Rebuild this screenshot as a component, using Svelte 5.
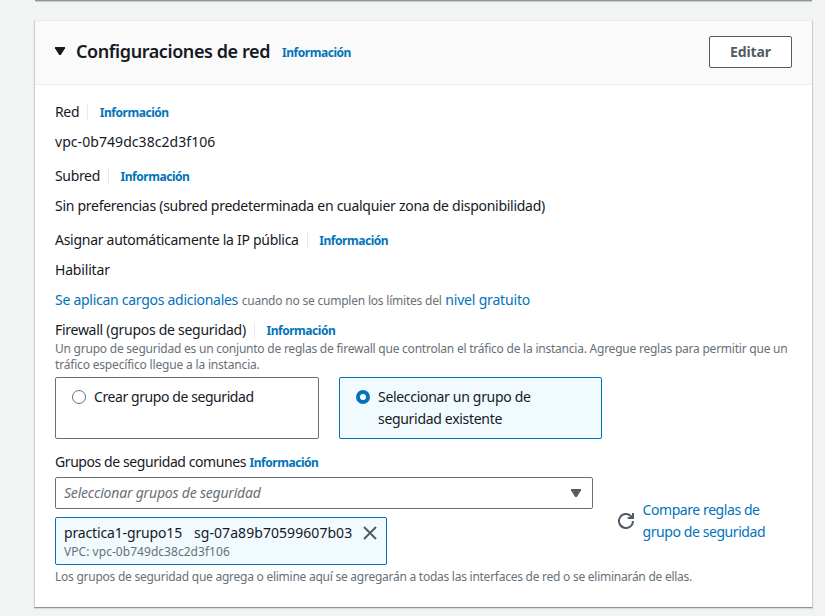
<script>
  let choice = $state('existing');
</script>

{#snippet info()}<a class="info" href="#info">Información</a>{/snippet}

<div class="page">
  <div class="previous"></div>
  <section class="card">
    <header>
      <svg class="caret" width="10" height="8" viewBox="0 0 10 8"><path d="M0 0h10v1.2L5.8 8H4.2L0 1.2z" fill="#16191f" /></svg>
      <h2>Configuraciones de red</h2>
      {@render info()}
      <button class="edit">Editar</button>
    </header>

    <div class="body">
      <div class="label"><span class="t-short">Red</span><i></i>{@render info()}</div>
      <div class="value t-id">vpc-0b749dc38c2d3f106</div>
      <div class="label"><span class="t-short">Subred</span><i></i>{@render info()}</div>
      <div class="value">Sin preferencias (subred predeterminada en cualquier zona de disponibilidad)</div>
      <div class="label"><span>Asignar automáticamente la IP pública</span><i></i>{@render info()}</div>
      <div class="value t-light">Habilitar</div>
      <div class="charges"><a href="#cargos">Se aplican cargos adicionales</a><small>cuando no se cumplen los límites del</small><a class="t-light" href="#nivel">nivel gratuito</a></div>

      <div class="label firewall"><span>Firewall (grupos de seguridad)</span><i></i>{@render info()}</div>
      <p class="hint">Un grupo de seguridad es un conjunto de reglas de firewall que controlan el tráfico de la instancia. Agregue reglas para permitir que un<br /><span class="t-light">tráfico específico llegue a la instancia.</span></p>

      <div class="tiles">
        <button class="tile first" class:on={choice === 'new'} onclick={() => (choice = 'new')}>
          <span class="radio"></span><span class="t-tight">Crear grupo de seguridad</span>
        </button>
        <button class="tile" class:on={choice === 'existing'} onclick={() => (choice = 'existing')}>
          <span class="radio"></span><span>Seleccionar un grupo de<br />seguridad existente</span>
        </button>
      </div>

      <div class="groups">
        <div class="picker">
          <div class="common"><span class="t-tight">Grupos de seguridad comunes</span>{@render info()}</div>
          <div class="select">
            <em>Seleccionar grupos de seguridad</em>
            <svg width="10" height="8" viewBox="0 0 10 8"><path d="M0 0h10v1.2L5.8 8H4.2L0 1.2z" fill="#545b64" /></svg>
          </div>
          <div class="token">
            <div>
              <div class="names"><span class="t-name">practica1-grupo15</span><span class="t-id">sg-07a89b70599607b03</span></div>
              <div class="vpc">VPC: vpc-0b749dc38c2d3f106</div>
            </div>
            <svg class="close" width="14" height="14" viewBox="0 0 14 14"><path d="M1 1l12 12M13 1L1 13" stroke="#545b64" stroke-width="2" fill="none" /></svg>
          </div>
        </div>
        <div class="compare">
          <svg width="16" height="16" viewBox="0 0 16 16" fill="none" stroke="#545b64" stroke-width="2"><path d="M15 8a7 7 0 1 1-2.2-5.1L15 5" /><path d="M15 0v5h-5.2" /></svg>
          <a class="t-tight" href="#reglas">Compare reglas de<br />grupo de seguridad</a>
        </div>
      </div>
      <p class="foot">Los grupos de seguridad que agrega o elimine aquí se agregarán a todas las interfaces de red o se eliminarán de ellas.</p>
    </div>
  </section>
</div>

<style>
  .page {
    box-sizing: border-box;
    height: 616px;
    overflow: hidden;
    padding: 0 12px 0 34px;
    background: #f2f3f3;
    color: #16191f;
    font: 14px/22px 'Noto Sans', 'Open Sans', sans-serif;
    letter-spacing: -0.275px;
    white-space: nowrap;
  }
  .previous { height: 1px; margin: 0 1px; background: #879596; box-shadow: 0 1px 1px #c3c9ca; }
  .card {
    box-sizing: border-box;
    height: 588px;
    margin-top: 19px;
    border: 1px solid #c9cfd0;
    border-top-color: #eaeded;
    border-bottom-color: #879596;
    background: #fff;
    box-shadow: 0 1px 1px #d5dbdb;
  }
  header {
    box-sizing: border-box;
    height: 64px;
    display: flex;
    align-items: center;
    padding: 0 20px 1px;
    background: #fafafa;
    border-bottom: 1px solid #eaeded;
  }
  .caret { margin: 0 11px 3px 0; }
  h2 { margin: 0 12px 3px 0; font-size: 18px; font-weight: 600; letter-spacing: -0.414px; }
  a { color: #0073bb; text-decoration: none; }
  .info { font-size: 12px; font-weight: 700; letter-spacing: -0.46px; }
  header .info { padding-top: 1px; }
  .label .info, .common .info { padding-top: 2px; line-height: 20px; }
  .edit {
    box-sizing: border-box;
    width: 83px;
    height: 32px;
    margin-left: auto;
    padding: 0;
    border: 1px solid #545b64;
    border-radius: 2px;
    background: #fff;
    color: #545b64;
    font: 700 14px/20px 'Noto Sans', sans-serif;
    letter-spacing: -0.1px;
  }
  .body { padding: 16px 20px 0; }
  .label { display: flex; align-items: center; margin-bottom: 8px; }
  .label i { width: 1px; height: 16px; margin: 0 11.6px 0 8px; background: #eaeded; }
  .value { margin-bottom: 12px; }
  .t-short { letter-spacing: -0.34px; }
  .t-id { letter-spacing: 0.06px; }
  .t-light { letter-spacing: -0.18px; }
  .t-tight { letter-spacing: -0.42px; }
  .t-name { letter-spacing: -0.15px; }
  .value + .charges { margin-top: -4px; }
  .charges { display: flex; gap: 3.6px; margin-bottom: 8px; }
  small { font-size: 12px; letter-spacing: -0.212px; color: #687078; padding-top: 1px; line-height: 21px; }
  .firewall { margin: 0; }
  .hint, .foot { margin: 0; font-size: 12px; line-height: 16px; color: #687078; letter-spacing: -0.228px; }
  .foot { margin-top: 4px; letter-spacing: -0.254px; }
  .tiles { display: flex; gap: 20px; margin-top: 4px; }
  .tile {
    box-sizing: border-box;
    width: 263px;
    height: 62px;
    display: flex;
    align-items: flex-start;
    gap: 8px;
    padding: 8px 16px;
    border: 1px solid #687078;
    border-radius: 2px;
    background: #fff;
    color: inherit;
    font: inherit;
    letter-spacing: -0.31px;
    text-align: left;
  }
  .first { width: 264px; }
  .tile.on { border-color: #0073bb; background: #f1faff; }
  .radio { box-sizing: border-box; width: 14px; height: 14px; margin-top: 4px; border: 1px solid #687078; border-radius: 50%; background: #fff; }
  .on .radio { border: 4px solid #0073bb; }
  .groups { display: flex; margin-top: 12px; }
  .picker { width: 538px; }
  .common { display: flex; align-items: center; gap: 3.5px; }
  .select {
    box-sizing: border-box;
    height: 32px;
    display: flex;
    align-items: center;
    justify-content: space-between;
    margin: 4px 0 8px;
    padding: 0 11px 0 8px;
    border: 1px solid #687078;
    border-radius: 2px;
    color: #687078;
    letter-spacing: -0.2px;
  }
  .token {
    box-sizing: border-box;
    width: 332px;
    height: 48px;
    display: flex;
    justify-content: space-between;
    padding: 4px 9px 0 8px;
    border: 1px solid #0073bb;
    border-radius: 2px;
    background: #f1faff;
  }
  .names { display: flex; gap: 12px; }
  .vpc { font-size: 12px; line-height: 16px; color: #687078; letter-spacing: 0.04px; }
  .close { margin-top: 4px; }
  .compare { display: flex; gap: 8.5px; margin: 48px 0 0 25px; }
  .compare svg { margin-top: 14px; }
</style>
